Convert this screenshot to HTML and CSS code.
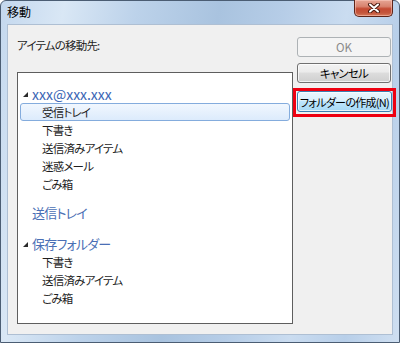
FILE: index.html
```html
<!DOCTYPE html>
<html lang="ja">
<head>
<meta charset="utf-8">
<title>移動</title>
<link rel="stylesheet" href="styles.css">
</head>
<body>
<div class="window">
  <div class="titlebar">
    <span class="title">移動</span>
    <div class="close">
      <svg width="14" height="10" viewBox="0 0 14 10">
        <path d="M3 1.5 L11 8.5 M11 1.5 L3 8.5" stroke="#4a1a10" stroke-width="4" stroke-linecap="round"/>
        <path d="M3 1.5 L11 8.5 M11 1.5 L3 8.5" stroke="#ffffff" stroke-width="2" stroke-linecap="round"/>
      </svg>
    </div>
  </div>
  <div class="client">
    <div class="main">
      <div class="label">アイテムの移動先:</div>
      <div class="tree">
        <div class="row head mail"><span class="tri"></span>xxx@xxx.xxx</div>
        <div class="row child selected">受信トレイ</div>
        <div class="row child">下書き</div>
        <div class="row child">送信済みアイテム</div>
        <div class="row child">迷惑メール</div>
        <div class="row child">ごみ箱</div>
        <div class="row head solo">送信トレイ</div>
        <div class="row head group"><span class="tri"></span>保存フォルダー</div>
        <div class="row child">下書き</div>
        <div class="row child">送信済みアイテム</div>
        <div class="row child">ごみ箱</div>
      </div>
    </div>
    <div class="buttons">
      <div class="btn disabled">OK</div>
      <div class="btn">キャンセル</div>
      <div class="mark">
        <div class="btn focus">フォルダーの作成(N)</div>
      </div>
    </div>
  </div>
</div>
</body>
</html>
```

FILE: styles.css
```css
* { box-sizing: border-box; }
html, body { margin: 0; padding: 0; background: #ffffff; }
body {
  font-family: "Noto Sans CJK JP", "Noto Sans", sans-serif;
  font-size: 11.5px;
  letter-spacing: -0.8px;
  font-feature-settings: "palt";
  color: #1e1e1e;
}
.window {
  width: 400px;
  height: 343px;
  border: 1px solid #4b5d73;
  border-radius: 6px 6px 0 0;
  padding: 0 6px 7px 6px;
  display: flex;
  flex-direction: column;
  background: linear-gradient(100deg, #c4d8ee 0%, #d9e7f5 14%, #bcd2ea 30%, #a9c3df 48%, #b6cde7 62%, #cadcf0 76%, #b8cfe9 88%, #cfdff1 100%);
}
.titlebar {
  height: 23px;
  margin: 0 -5px;
  display: flex;
  justify-content: space-between;
  align-items: flex-start;
}
.title {
  padding-left: 5px;
  line-height: 22px;
  font-size: 12px;
  letter-spacing: 0;
  color: #000;
}
.close {
  width: 39px;
  height: 17px;
  margin-right: 5px;
  margin-top: -1px;
  border: 1px solid #5e2418;
  border-top: none;
  border-radius: 0 0 5px 5px;
  background: linear-gradient(#e6a594 0%, #d8836f 40%, #c44a32 55%, #c4563c 80%, #d77a5a 100%);
  box-shadow: inset 0 0 0 1px rgba(255, 210, 200, 0.5);
  display: flex;
  align-items: center;
  justify-content: center;
}
.close svg { display: block; }
.client {
  flex: 1;
  display: flex;
  gap: 4px;
  padding: 12px 0 10px 9px;
  background: #f0f0f0;
  border: 1px solid #aebfd3;
}
.main {
  width: 276px;
  display: flex;
  flex-direction: column;
}
.label {
  line-height: 16px;
  height: 16px;
  margin-bottom: 19px;
  color: #1e1e1e;
}
.tree {
  height: 252px;
  background: #ffffff;
  border: 1px solid #5e5e5e;
  padding-top: 12px;
}
.row {
  height: 18px;
  line-height: 18px;
  white-space: nowrap;
  display: flex;
  align-items: center;
}
.head {
  padding-left: 5px;
  color: #4a6fb5;
  font-size: 13px;
  letter-spacing: -0.8px;
}
.head.mail { font-size: 14px; letter-spacing: 0; color: #3b66b5; }
.head.solo { padding-left: 14px; margin-top: 11px; }
.head.group { margin-top: 13px; }
.tri {
  width: 5px;
  height: 5px;
  margin-right: 4px;
  margin-top: 1px;
  background: #2a2a2a;
  clip-path: polygon(100% 0, 100% 100%, 0 100%);
}
.child {
  padding-left: 24px;
  color: #1e1e1e;
}
.child.selected {
  margin: 0 2px;
  padding-left: 21px;
  border: 1px solid #84acdd;
  border-radius: 3px;
  background: linear-gradient(#f1f7fe, #dcebfc);
}
.buttons {
  width: 94px;
  display: flex;
  flex-direction: column;
}
.btn {
  height: 20px;
  border: 1px solid #707070;
  border-radius: 3px;
  display: flex;
  align-items: center;
  justify-content: center;
  color: #000;
  background: linear-gradient(#f2f2f2 0%, #ebebeb 45%, #dddddd 50%, #cfcfcf 100%);
  box-shadow: inset 0 0 0 1px rgba(255, 255, 255, 0.7);
  margin-bottom: 6px;
}
.btn.disabled {
  border-color: #adb2b5;
  background: #f4f4f4;
  color: #8a8a8a;
  box-shadow: none;
  letter-spacing: 0;
}
.mark {
  margin: -1px -5px 0 -4px;
  border: 3px solid #ee0011;
  padding: 0 1px 2px 1px;
}
.btn.focus {
  margin-bottom: 0;
  height: 21px;
  border-color: #3c7fb1;
  background: linear-gradient(#eaf6fd 0%, #d9f0fc 45%, #bee6fd 50%, #a7d9f5 100%);
  white-space: nowrap;
  font-size: 11px;
  letter-spacing: -0.7px;
}
```
